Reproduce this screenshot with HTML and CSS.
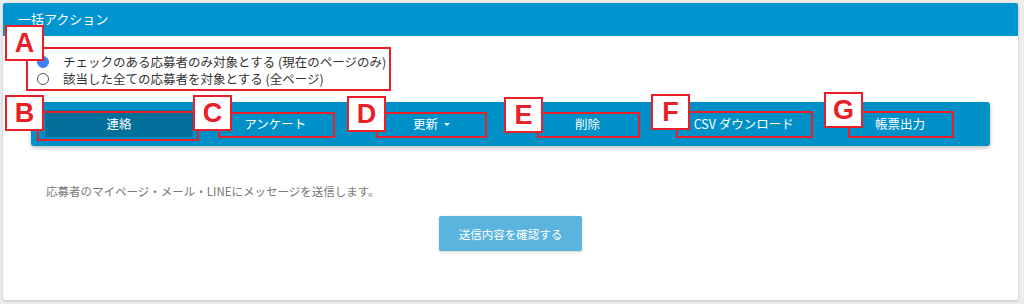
FILE: index.html
```html
<!DOCTYPE html>
<html lang="ja">
<head>
  <meta charset="UTF-8" />
  <title>一括アクション</title>
  <link rel="stylesheet" href="styles.css">
</head>
<body>
  <div class="panel">
    <div class="panel-head">一括アクション</div>

    <div class="panel-body">
      <!-- target selection -->
      <div class="targets">
        <label class="radio"><span class="dot checked"></span>チェックのある応募者のみ対象とする (現在のページのみ)</label>
        <label class="radio"><span class="dot"></span>該当した全ての応募者を対象とする (全ページ)</label>
      </div>

      <!-- action tabs -->
      <div class="toolbar">
        <div class="tab active">連絡</div>
        <div class="tab">アンケート</div>
        <div class="tab">更新 <span class="caret"></span></div>
        <div class="tab">削除</div>
        <div class="tab">CSV ダウンロード</div>
        <div class="tab">帳票出力</div>
      </div>

      <p class="note">応募者のマイページ・メール・LINEにメッセージを送信します。</p>

      <div class="actions">
        <button class="btn-confirm">送信内容を確認する</button>
      </div>
    </div>
  </div>

  <!-- annotation overlay -->
  <div class="mark box-a"></div>
  <div class="mark box-b"></div>
  <div class="mark box-c"></div>
  <div class="mark box-d"></div>
  <div class="mark box-e"></div>
  <div class="mark box-f"></div>
  <div class="mark box-g"></div>

  <div class="tag tag-a">A</div>
  <div class="tag tag-b">B</div>
  <div class="tag tag-c">C</div>
  <div class="tag tag-d">D</div>
  <div class="tag tag-e">E</div>
  <div class="tag tag-f">F</div>
  <div class="tag tag-g">G</div>
</body>
</html>
```

FILE: styles.css
```css
* {
  margin: 0;
  padding: 0;
  box-sizing: border-box;
  font-family: "Noto Sans CJK JP", "Noto Sans", sans-serif;
}

body {
  background-color: #ededed;
  width: 1024px;
  height: 304px;
  overflow: hidden;
  padding: 3px 6px 4px 3px;
  position: relative;
}

.panel {
  background-color: #fff;
  height: 297px;
  border-radius: 2px;
  box-shadow: 0 1px 3px rgba(0, 0, 0, 0.2);
  overflow: hidden;
}

.panel-head {
  background-color: #0095d0;
  color: #fff;
  height: 33px;
  line-height: 31px;
  padding-left: 15px;
  font-size: 13px;
}

.panel-body {
  padding: 17px 28px 0 28px;
}

.targets {
  display: flex;
  flex-direction: column;
  padding-left: 6px;
}

.radio {
  display: flex;
  align-items: center;
  font-size: 12.5px;
  color: #333;
  height: 17px;
  line-height: 17px;
}

.dot {
  width: 12px;
  height: 12px;
  border: 1px solid #555;
  border-radius: 50%;
  margin-right: 14px;
  flex-shrink: 0;
}

.dot.checked {
  border-color: #3b82f6;
  background-color: #3b82f6;
}

.toolbar {
  margin-top: 15px;
  background-color: #0090c8;
  border-radius: 3px;
  height: 44px;
  padding: 8px 16px 9px 14px;
  display: flex;
  gap: 8px;
  box-shadow: 0 2px 4px rgba(0, 0, 0, 0.25);
}

.tab {
  flex: 1;
  display: flex;
  justify-content: center;
  align-items: center;
  color: #fff;
  font-size: 12.5px;
  border-radius: 2px;
}

.tab.active {
  background-color: #03709c;
}

.caret {
  display: inline-block;
  width: 0;
  height: 0;
  margin-left: 6px;
  margin-top: 2px;
  border-left: 3px solid transparent;
  border-right: 3px solid transparent;
  border-top: 3px solid #fff;
}

.note {
  margin-top: 37px;
  padding-left: 15px;
  font-size: 11.5px;
  color: #777;
  line-height: 16px;
}

.actions {
  display: flex;
  justify-content: center;
  margin-top: 17px;
}

.btn-confirm {
  width: 143px;
  height: 35px;
  border: none;
  border-radius: 2px;
  background-color: #5ab4dd;
  color: #fff;
  font-size: 11.5px;
  box-shadow: 0 1px 3px rgba(0, 0, 0, 0.2);
}

/* red annotation boxes */
.mark {
  position: absolute;
  border: 2px solid #e8202a;
}

.box-a { left: 26px; top: 47px; width: 365px; height: 44px; }
.box-b { left: 37px; top: 111px; width: 162px; height: 30px; }
.box-c { left: 218px; top: 112px; width: 117px; height: 26px; }
.box-d { left: 376px; top: 112px; width: 111px; height: 26px; }
.box-e { left: 537px; top: 112px; width: 103px; height: 26px; }
.box-f { left: 676px; top: 111px; width: 137px; height: 27px; }
.box-g { left: 848px; top: 111px; width: 106px; height: 27px; }

.tag {
  position: absolute;
  width: 39px;
  height: 36px;
  background-color: #fff;
  border: 2px solid #e8202a;
  color: #e8202a;
  font-family: "Liberation Sans", Arial, sans-serif;
  font-weight: bold;
  font-size: 27px;
  line-height: 32px;
  text-align: center;
}

.tag-a { left: 5px; top: 25px; }
.tag-b { left: 5px; top: 95px; }
.tag-c { left: 193px; top: 95px; }
.tag-d { left: 347px; top: 96px; }
.tag-e { left: 504px; top: 97px; }
.tag-f { left: 651px; top: 94px; }
.tag-g { left: 824px; top: 92px; }
```
